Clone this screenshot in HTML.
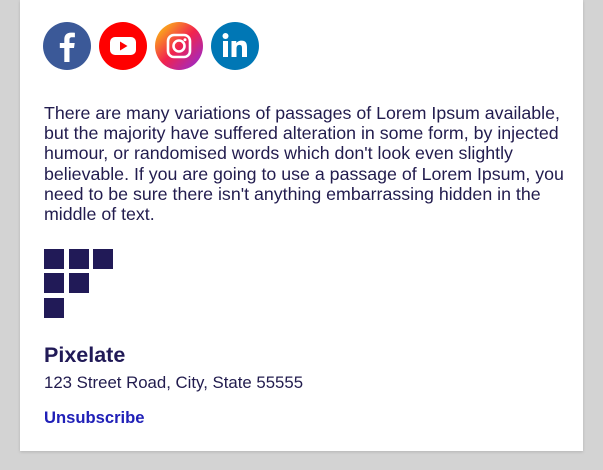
<!DOCTYPE html>
<html><head><style>
body{margin:0;width:603px;height:470px;background:#d3d3d3;font-family:"Liberation Sans",sans-serif;overflow:hidden;position:relative}
.card{position:absolute;left:20px;top:0;width:563px;height:451px;background:#fff;box-shadow:0 1px 3px rgba(0,0,0,.15)}
.icons{position:absolute;left:23px;top:22px}
.icons svg{position:absolute;top:0}
p{position:absolute;left:24px;top:103px;width:540px;margin:0;font-size:17.8px;line-height:20.2px;color:#221c4e;white-space:nowrap}
.sq{position:absolute;width:20px;height:20px;background:#211a57}
h2{position:absolute;left:24px;top:343px;margin:0;font-size:21.5px;color:#211a57}
.addr{position:absolute;left:24px;top:373px;font-size:16.8px;color:#221c4e}
.un{position:absolute;left:24px;top:408px;font-size:16.6px;font-weight:bold;color:#2020b8}
</style></head><body>
<div class="card">
<div class="icons">
<svg style="left:0" width="48" height="48" viewBox="0 0 48 48"><circle cx="24" cy="24" r="24" fill="#3b5998"/><path d="M26.5 40V26h4.5l.7-5h-5.2v-3.2c0-1.5.5-2.5 2.6-2.5h2.8v-4.5c-.5-.1-2.1-.2-4-.2-4 0-6.6 2.4-6.6 6.8V21h-4.5v5h4.5v14z" fill="#fff"/></svg>
<svg style="left:56px" width="48" height="48" viewBox="0 0 48 48"><circle cx="24" cy="24" r="24" fill="#f00"/><rect x="11" y="15" width="26" height="18" rx="5" fill="#fff"/><path d="M21 19.5v9l7.5-4.5z" fill="#f00"/></svg>
<svg style="left:112px" width="48" height="48" viewBox="0 0 48 48"><defs><linearGradient id="g" x1="0" y1="0" x2="1" y2="1"><stop offset="0" stop-color="#fdd60a"/><stop offset=".5" stop-color="#f2234d"/><stop offset="1" stop-color="#8a2be2"/></linearGradient></defs><circle cx="24" cy="24" r="24" fill="url(#g)"/><rect x="13" y="13" width="22" height="22" rx="6" fill="none" stroke="#fff" stroke-width="2.6"/><circle cx="24" cy="24" r="5.5" fill="none" stroke="#fff" stroke-width="2.6"/><circle cx="30" cy="17.8" r="1.5" fill="#fff"/></svg>
<svg style="left:168px" width="48" height="48" viewBox="0 0 48 48"><circle cx="24" cy="24" r="24" fill="#0077b5"/><rect x="12" y="19" width="5" height="16" fill="#fff"/><circle cx="14.5" cy="14" r="3" fill="#fff"/><path d="M20.5 19h4.8v2.3c.8-1.4 2.6-2.7 5.2-2.7 4.6 0 5.5 3 5.5 7V35h-5v-8.3c0-2-.1-3.8-2.5-3.8s-3 1.8-3 3.8V35h-5z" fill="#fff"/></svg>
</div>
<p>There are many variations of passages of Lorem Ipsum available,<br>but the majority have suffered alteration in some form, by injected<br>humour, or randomised words which don't look even slightly<br>believable. If you are going to use a passage of Lorem Ipsum, you<br>need to be sure there isn't anything embarrassing hidden in the<br>middle of text.</p>
<div class="sq" style="left:24px;top:249px"></div><div class="sq" style="left:49px;top:249px"></div><div class="sq" style="left:73px;top:249px"></div>
<div class="sq" style="left:24px;top:273px"></div><div class="sq" style="left:49px;top:273px"></div>
<div class="sq" style="left:24px;top:298px"></div>
<h2>Pixelate</h2>
<div class="addr">123 Street Road, City, State 55555</div>
<div class="un">Unsubscribe</div>
</div>
</body></html>
